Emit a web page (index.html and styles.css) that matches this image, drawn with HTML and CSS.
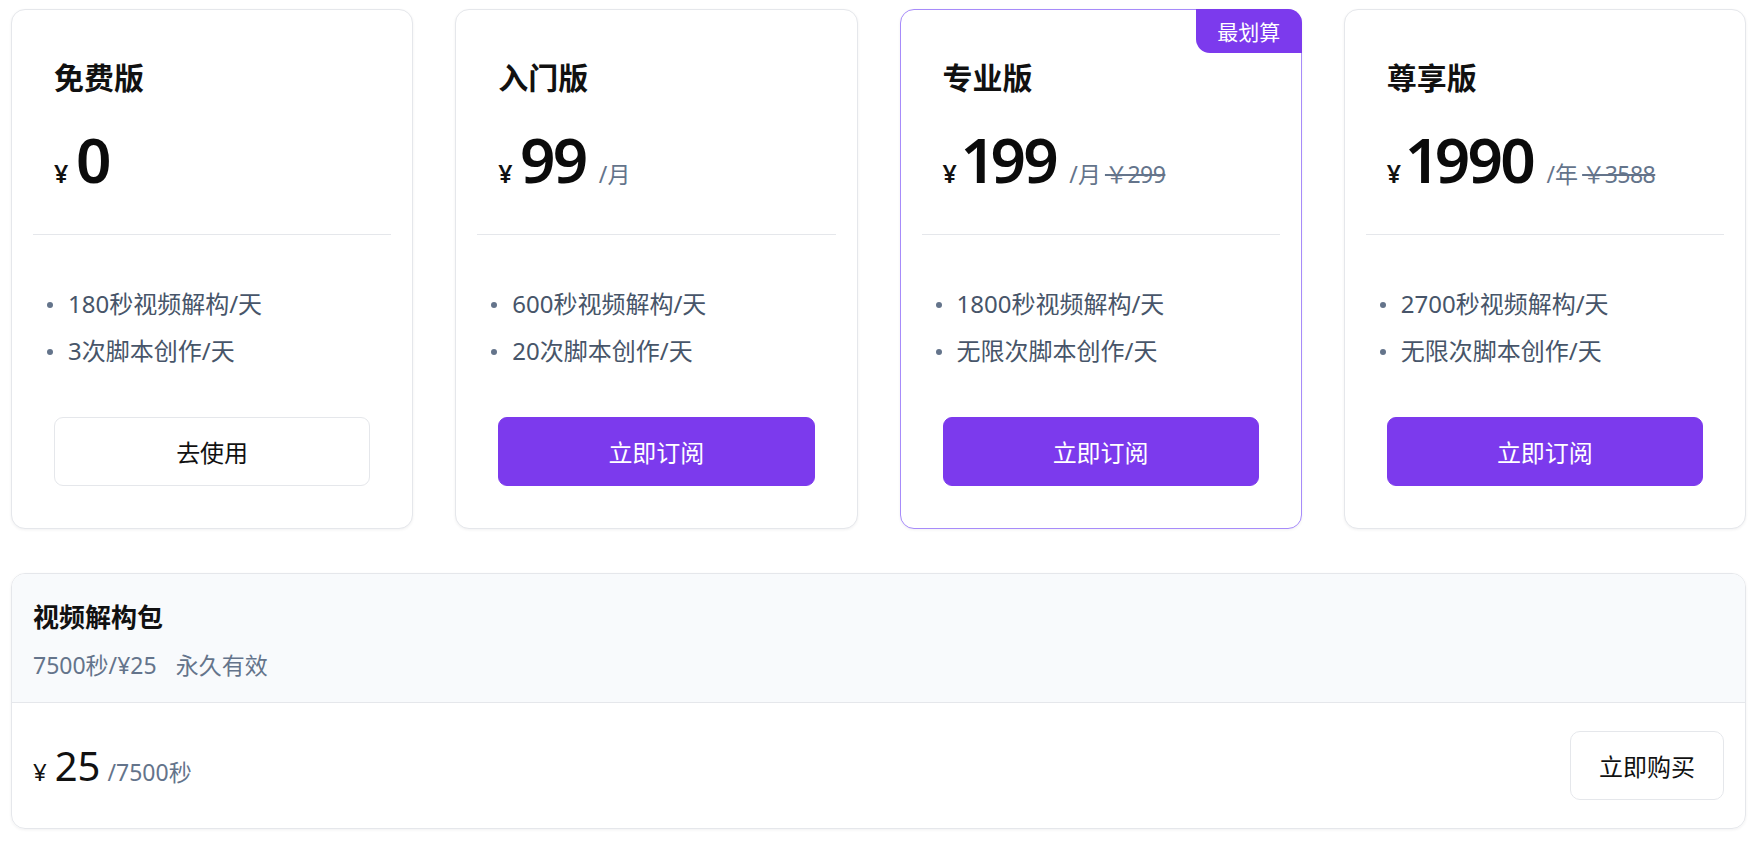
FILE: index.html
```html
<!DOCTYPE html>
<html lang="zh-CN">
<head>
<meta charset="utf-8">
<title>订阅方案</title>
<link rel="stylesheet" href="styles.css">
</head>
<body>
<div class="page">
  <div class="plans">
    <div class="plan">
      <div class="plan-head">
        <h3 class="plan-name">免费版</h3>
        <div class="price"><span class="cur">¥</span><span class="amount">0</span></div>
      </div>
      <div class="plan-body">
        <ul class="features">
          <li>180秒视频解构/天</li>
          <li>3次脚本创作/天</li>
        </ul>
        <button class="btn btn-outline">去使用</button>
      </div>
    </div>
    <div class="plan">
      <div class="plan-head">
        <h3 class="plan-name">入门版</h3>
        <div class="price"><span class="cur">¥</span><span class="amount">99</span><span class="unit">/月</span></div>
      </div>
      <div class="plan-body">
        <ul class="features">
          <li>600秒视频解构/天</li>
          <li>20次脚本创作/天</li>
        </ul>
        <button class="btn btn-primary">立即订阅</button>
      </div>
    </div>
    <div class="plan plan-featured">
      <span class="badge">最划算</span>
      <div class="plan-head">
        <h3 class="plan-name">专业版</h3>
        <div class="price"><span class="cur">¥</span><span class="amount">199</span><span class="unit">/月</span><span class="old">￥299</span></div>
      </div>
      <div class="plan-body">
        <ul class="features">
          <li>1800秒视频解构/天</li>
          <li>无限次脚本创作/天</li>
        </ul>
        <button class="btn btn-primary">立即订阅</button>
      </div>
    </div>
    <div class="plan">
      <div class="plan-head">
        <h3 class="plan-name">尊享版</h3>
        <div class="price"><span class="cur">¥</span><span class="amount">1990</span><span class="unit">/年</span><span class="old">￥3588</span></div>
      </div>
      <div class="plan-body">
        <ul class="features">
          <li>2700秒视频解构/天</li>
          <li>无限次脚本创作/天</li>
        </ul>
        <button class="btn btn-primary">立即订阅</button>
      </div>
    </div>
  </div>

  <div class="pack">
    <div class="pack-head">
      <h3 class="pack-title">视频解构包</h3>
      <p class="pack-desc"><span>7500秒/¥25</span><span>永久有效</span></p>
    </div>
    <div class="pack-foot">
      <div class="pack-price"><span class="cur">¥</span><span class="amount">25</span><span class="unit">/7500秒</span></div>
      <button class="btn btn-outline btn-buy">立即购买</button>
    </div>
  </div>
</div>
</body>
</html>
```

FILE: styles.css
```css
* { box-sizing: border-box; }

body {
  margin: 0;
  background: #ffffff;
  font-family: "Noto Sans", "Noto Sans CJK SC", sans-serif;
  color: #111111;
}

.page {
  padding: 9px 9px 12px 11px;
}

.plans {
  display: grid;
  grid-template-columns: repeat(4, 1fr);
  gap: 42px;
}

.plan {
  position: relative;
  display: flex;
  flex-direction: column;
  padding: 21px;
  background: #fff;
  border: 1px solid #e5e7eb;
  border-radius: 14px;
  box-shadow: 0 1px 3px rgba(15, 23, 42, 0.06);
}

.plan-featured {
  border-color: #a78bfa;
}

.badge {
  position: absolute;
  top: -1px;
  right: -1px;
  width: 106px;
  height: 44px;
  display: flex;
  align-items: center;
  justify-content: center;
  background: #7c3aed;
  color: #fff;
  font-size: 21px;
  border-radius: 0 14px 0 14px;
}

.plan-head {
  padding: 24px 21px 43px;
  border-bottom: 1px solid #e5e7eb;
}

.plan-name {
  margin: 0;
  font-size: 30px;
  line-height: 45px;
  font-weight: 700;
  color: #111;
}

.price {
  margin-top: 27px;
  display: flex;
  align-items: baseline;
  line-height: 64px;
  height: 64px;
}

.price .cur {
  font-size: 25px;
  font-weight: 600;
  margin-right: 7px;
}

.price .amount {
  font-size: 62px;
  font-weight: 600;
  letter-spacing: -4px;
  font-variant-numeric: proportional-nums;
  color: #0b0b0b;
}

.price .unit {
  margin-left: 14px;
  font-size: 23px;
  color: #64748b;
}

.price .old {
  margin-left: 4px;
  font-size: 23px;
  color: #64748b;
  text-decoration: line-through;
  letter-spacing: -0.5px;
}

.plan-body {
  flex: 1;
  display: flex;
  flex-direction: column;
  padding: 51px 21px 21px;
}

.features {
  list-style: none;
  margin: 0 0 48px;
  padding: 0;
  display: flex;
  flex-direction: column;
  gap: 11px;
}

.features li {
  position: relative;
  padding-left: 14px;
  font-size: 24px;
  line-height: 36px;
  color: #475569;
}

.features li::before {
  content: "";
  position: absolute;
  left: -7px;
  top: 16px;
  width: 6px;
  height: 6px;
  border-radius: 50%;
  background: #64748b;
}

.btn {
  font-family: inherit;
  font-size: 24px;
  height: 69px;
  border-radius: 9px;
  cursor: pointer;
}

.plan .btn {
  margin-top: auto;
  width: 100%;
}

.btn-primary {
  background: #7c3aed;
  color: #fff;
  border: 1px solid #7c3aed;
}

.btn-outline {
  background: #fff;
  color: #111;
  border: 1px solid #e5e7eb;
}

.pack {
  margin-top: 44px;
  border: 1px solid #e5e7eb;
  border-radius: 14px;
  overflow: hidden;
  box-shadow: 0 1px 3px rgba(15, 23, 42, 0.06);
}

.pack-head {
  background: #f8fafc;
  padding: 25px 21px 20px;
  border-bottom: 1px solid #e5e7eb;
}

.pack-title {
  margin: 0;
  font-size: 26px;
  line-height: 36px;
  font-weight: 700;
  color: #111;
}

.pack-desc {
  margin: 13px 0 0;
  font-size: 23px;
  line-height: 34px;
  color: #64748b;
  display: flex;
  gap: 19px;
}

.pack-foot {
  display: flex;
  align-items: center;
  justify-content: space-between;
  padding: 28px 21px;
}

.pack-price {
  display: flex;
  align-items: baseline;
}

.pack-price .cur {
  font-size: 24px;
  margin-right: 8px;
}

.pack-price .amount {
  font-size: 40px;
  line-height: 52px;
}

.pack-price .unit {
  margin-left: 7px;
  font-size: 23px;
  color: #64748b;
}

.btn-buy {
  padding: 0 28px;
  border-radius: 10px;
}
```
